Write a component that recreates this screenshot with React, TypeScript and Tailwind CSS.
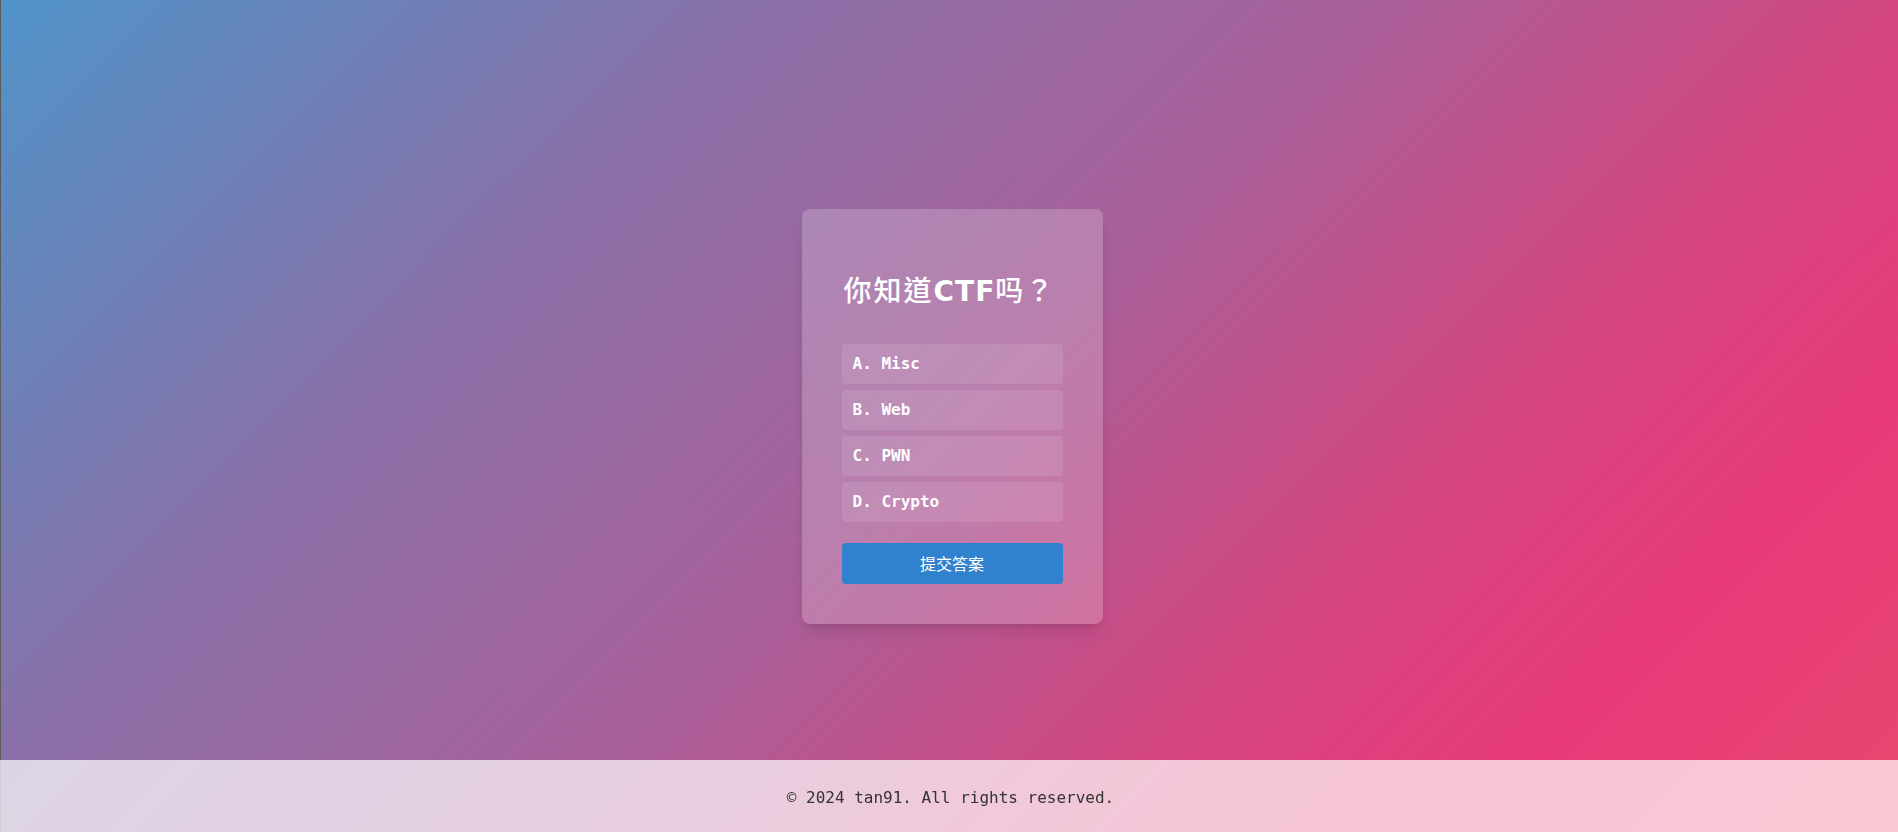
import React from 'react';

const options = ['A. Misc', 'B. Web', 'C. PWN', 'D. Crypto'];

const mono = "font-['DejaVu_Sans_Mono','Liberation_Mono','Noto_Sans_CJK_SC',monospace]";

export default function App() {
  return (
    <div className="relative min-h-screen border-l border-[#5c5c5c] bg-[linear-gradient(135deg,#4f93c8_0%,#8a70a8_28%,#a8609a_50%,#d4467f_70%,#e83a7a_84%,#e8486e_100%)]">
      <main className="flex h-screen items-center justify-center pl-[5px]">
        <div className="w-[301px] rounded-lg bg-white/20 p-10 shadow-lg">
          <h2 className="mt-[23px] mb-[38px] h-[34px] overflow-visible whitespace-nowrap pl-[2px] text-[28px] leading-[34px] font-medium tracking-[2px] text-white font-['Noto_Sans_CJK_TC',sans-serif]">
            你知道<span className="font-bold leading-[34px] tracking-[1px] font-['DejaVu_Sans',sans-serif]">CTF</span>吗？
          </h2>
          <div className="flex flex-col gap-[6px]">
            {options.map((o) => (
              <div
                key={o}
                className={`flex h-10 items-center rounded bg-white/10 px-[11px] text-base font-bold text-white ${mono}`}
              >
                {o}
              </div>
            ))}
          </div>
          <button className="mt-[21px] h-[41px] w-full rounded bg-[#3182ce] text-base text-white font-['Noto_Sans_CJK_SC',sans-serif]">
            提交答案
          </button>
        </div>
      </main>
      <footer className="fixed inset-x-0 bottom-0 flex h-[72px] items-center justify-center bg-white/70 pt-1 pl-[3px]">
        <p className={`text-base text-[#333] ${mono}`}>© 2024 tan91. All rights reserved.</p>
      </footer>
    </div>
  );
}
